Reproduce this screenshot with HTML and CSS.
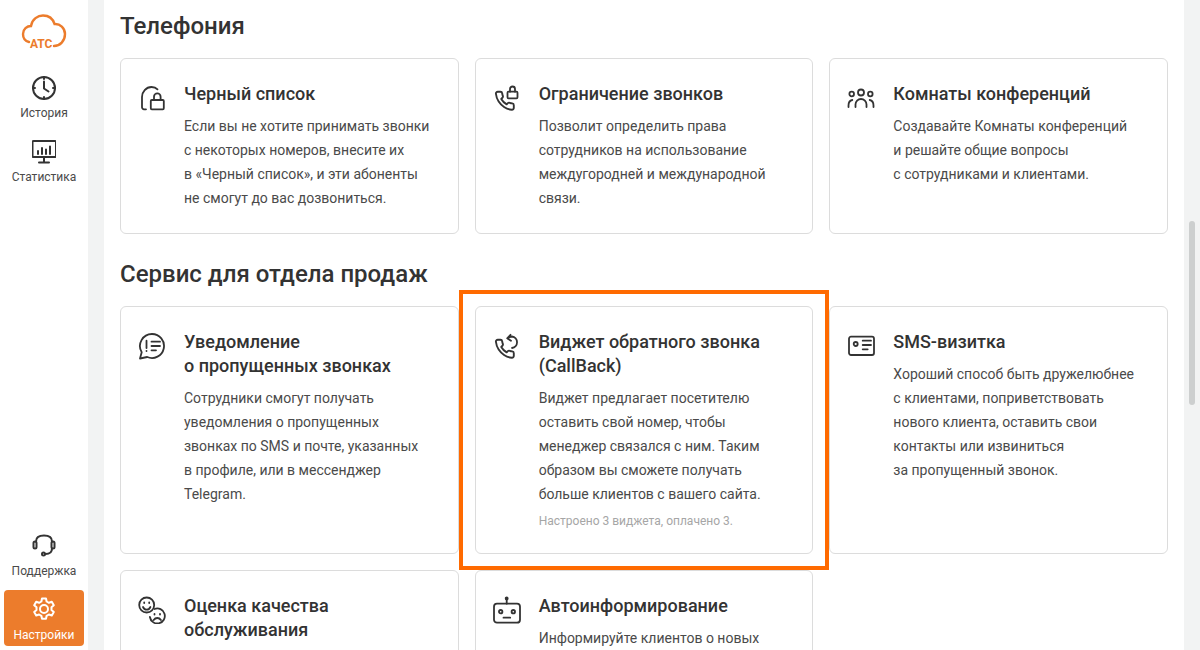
FILE: index.html
```html
<!DOCTYPE html>
<html lang="ru">
<head>
  <meta charset="UTF-8" />
  <meta name="viewport" content="width=device-width, initial-scale=1" />
  <title>Настройки АТС</title>
  <link rel="stylesheet" href="styles.css">
</head>
<body>
  <nav class="sidebar">
    <div class="logo">
      <svg width="44" height="36" viewBox="0 0 44 36" fill="none" stroke="#ec7c2c" stroke-width="2.400" stroke-linecap="round">
        <path d="M7 28C3 27 1 23.500 1 20C1 15 5 12 9 12C10 5 16 1.500 21 1.500C27 1.500 31 5 32.500 10C38 9.500 43 14 43 20C43 27 38 32 32 32"/>
        <text class="logo-text" x="8" y="33.500">АТС</text>
      </svg>
    </div>
    <a class="nav-item">
      <svg class="nav-icon" viewBox="0 0 24 24" fill="none" stroke="#333" stroke-width="2" stroke-linecap="round" stroke-linejoin="round">
        <circle cx="12" cy="12" r="11"/>
        <path d="M12 5.500V12.500L16.500 15.500M12 1v2M12 21v2M1 12h2M21 12h2"/>
      </svg>
      <span>История</span>
    </a>
    <a class="nav-item">
      <svg class="nav-icon" viewBox="0 0 24 24" fill="none" stroke="#333" stroke-width="2" stroke-linecap="round" stroke-linejoin="round">
        <rect x="0.500" y="1" width="23.500" height="16" rx="1"/>
        <path d="M12 17v5M7 22.500h10M6 14v-3M10 14V8M14 14V9.500M18 14V6.500"/>
      </svg>
      <span>Статистика</span>
    </a>
    <a class="nav-item nav-item--push nav-item--low">
      <svg class="nav-icon" viewBox="0 0 24 24" fill="none" stroke="#333" stroke-width="2" stroke-linecap="round" stroke-linejoin="round">
        <path d="M4 8.500C4 4.500 7.500 2.500 12 2.500S20 4.500 20 8.500"/>
        <rect x="1.500" y="8.500" width="3" height="7" rx="1.500"/>
        <rect x="19.500" y="8.500" width="3" height="7" rx="1.500"/>
        <path d="M20 15.500C20 19 17.500 21 13.500 21"/>
        <circle cx="11.500" cy="21" r="1.500"/>
      </svg>
      <span>Поддержка</span>
    </a>
    <a class="nav-item nav-item--active nav-item--low">
      <svg class="nav-icon" viewBox="0 0 24 24" fill="none" stroke="#fff" stroke-width="2" stroke-linecap="round" stroke-linejoin="round">
        <circle cx="12" cy="12" r="4"/>
        <path d="M10 1.500h4l.6 3 2.300 1.300 2.900-1 2 3.500-2.300 2v2.700l2.300 2-2 3.500-2.900-1-2.300 1.300-.6 3h-4l-.6-3-2.300-1.300-2.900 1-2-3.500 2.300-2v-2.700l-2.300-2 2-3.500 2.900 1 2.300-1.300z"/>
      </svg>
      <span>Настройки</span>
    </a>
  </nav>

  <main class="content">
    <h2 class="section-title">Телефония</h2>
    <div class="cards">
      <div class="card">
        <svg class="card-icon" viewBox="0 0 28 28">
          <path d="M8 25.300H6a2 2 0 0 1-2-2V13C4 8 8 3 13.500 3c2.500 0 4.500.7 6 2.300"/>
          <rect x="12.800" y="16" width="13" height="9.300" rx="1"/>
          <path d="M16 16v-3.300a3.300 3.300 0 0 1 6.600 0V16"/>
        </svg>
        <div>
          <h3 class="card-title">Черный список</h3>
          <p class="card-text">Если вы не хотите принимать звонки<br>с некоторых номеров, внесите их<br>в «Черный список», и эти абоненты<br>не смогут до вас дозвониться.</p>
        </div>
      </div>
      <div class="card">
        <svg class="card-icon" viewBox="0 0 28 28">
          <path class="phone" transform="translate(1 6) scale(.9)" d="M22 16.920v3a2 2 0 0 1-2.180 2 19.790 19.790 0 0 1-8.630-3.070 19.500 19.500 0 0 1-6-6 19.790 19.790 0 0 1-3.070-8.670A2 2 0 0 1 4.110 2h3a2 2 0 0 1 2 1.720 12.840 12.840 0 0 0 .7 2.810 2 2 0 0 1-.45 2.110L8.090 9.910a16 16 0 0 0 6 6l1.270-1.270a2 2 0 0 1 2.110-.45 12.840 12.840 0 0 0 2.810.7A2 2 0 0 1 22 16.920z"/>
          <rect x="14.500" y="7.700" width="10" height="6.600" rx="1"/>
          <path d="M17 7.700V5a2.500 2.500 0 0 1 5 0v2.700"/>
        </svg>
        <div>
          <h3 class="card-title">Ограничение звонков</h3>
          <p class="card-text">Позволит определить права<br>сотрудников на использование<br>междугородней и международной<br>связи.</p>
        </div>
      </div>
      <div class="card">
        <svg class="card-icon" viewBox="0 0 28 28">
          <circle cx="14" cy="8.500" r="3"/>
          <circle cx="4.700" cy="10" r="2.300"/>
          <circle cx="23.300" cy="10" r="2.300"/>
          <path d="M8.500 23v-2.500a5.500 5.500 0 0 1 11 0V23M1.500 23v-1.500c0-3 1.500-5 3.800-5.500M26.500 23v-1.500c0-3-1.500-5-3.800-5.500"/>
        </svg>
        <div>
          <h3 class="card-title">Комнаты конференций</h3>
          <p class="card-text">Создавайте Комнаты конференций<br>и решайте общие вопросы<br>с сотрудниками и клиентами.</p>
        </div>
      </div>
    </div>

    <h2 class="section-title section-title--next">Сервис для отдела продаж</h2>
    <div class="cards">
      <div class="card">
        <svg class="card-icon" viewBox="0 0 28 28">
          <path d="M14 2a12 12 0 1 1-4.800 23L2 26.500l1.700-6.300A12 12 0 0 1 14 2z"/>
          <path d="M8.500 8.700v7.300M8.500 18.800v.2M13.500 9.700h8.500M13.500 14h8.500M13.500 18.300h4.500"/>
        </svg>
        <div>
          <h3 class="card-title">Уведомление<br>о пропущенных звонках</h3>
          <p class="card-text">Сотрудники смогут получать<br>уведомления о пропущенных<br>звонках по SMS и почте, указанных<br>в профиле, или в мессенджер<br>Telegram.</p>
        </div>
      </div>
      <div class="card card--marked">
        <svg class="card-icon" viewBox="0 0 28 28">
          <path class="phone" transform="translate(1 6) scale(.9)" d="M22 16.920v3a2 2 0 0 1-2.180 2 19.790 19.790 0 0 1-8.630-3.070 19.500 19.500 0 0 1-6-6 19.790 19.790 0 0 1-3.070-8.670A2 2 0 0 1 4.110 2h3a2 2 0 0 1 2 1.720 12.840 12.840 0 0 0 .7 2.810 2 2 0 0 1-.45 2.110L8.090 9.910a16 16 0 0 0 6 6l1.270-1.270a2 2 0 0 1 2.110-.45 12.840 12.840 0 0 0 2.810.7A2 2 0 0 1 22 16.920z"/>
          <path d="M14.500 6.500C16 5 17.500 4.500 19 4.500a5.800 5.800 0 0 1 0 11.500M17.500 2.800L14.200 6.300 18 8.800"/>
        </svg>
        <div>
          <h3 class="card-title">Виджет обратного звонка<br>(CallBack)</h3>
          <p class="card-text">Виджет предлагает посетителю<br>оставить свой номер, чтобы<br>менеджер связался с ним. Таким<br>образом вы сможете получать<br>больше клиентов с вашего сайта.</p>
          <p class="card-note">Настроено 3 виджета, оплачено 3.</p>
        </div>
      </div>
      <div class="card">
        <svg class="card-icon" viewBox="0 0 28 28">
          <rect x="2" y="4.700" width="25" height="18.300" rx="2"/>
          <circle cx="8.700" cy="12" r="2"/>
          <path d="M15.700 8.700H24M15.700 13H24M15.700 17.300h5"/>
        </svg>
        <div>
          <h3 class="card-title">SMS-визитка</h3>
          <p class="card-text">Хороший способ быть дружелюбнее<br>с клиентами, поприветствовать<br>нового клиента, оставить свои<br>контакты или извиниться<br>за пропущенный звонок.</p>
        </div>
      </div>
      <div class="card">
        <svg class="card-icon" viewBox="0 0 28 28">
          <circle cx="8.700" cy="9" r="7.500"/>
          <path d="M5 11c1 2 2.500 2.700 3.700 2.700s2.700-.7 3.700-2.700"/>
          <path d="M6.200 6.500v.5M11.200 6.500v.5M16.500 18v.5M22 18v.5"/>
          <path d="M16.500 13A7.500 7.500 0 1 1 11.900 21M15.700 24c1-1.500 2.300-2 3.600-2s2.600.5 3.600 2"/>
        </svg>
        <div>
          <h3 class="card-title">Оценка качества<br>обслуживания</h3>
        </div>
      </div>
      <div class="card">
        <svg class="card-icon" viewBox="0 0 28 28">
          <rect x="1" y="7.700" width="26" height="19" rx="3"/>
          <path d="M13.700 3.500v4.200M10.500 21.700h6.700"/>
          <circle cx="13.700" cy="2.400" r="1" class="icon-dot"/>
          <circle cx="7.700" cy="15.700" r="1.700"/>
          <circle cx="20.300" cy="15.700" r="1.700"/>
        </svg>
        <div>
          <h3 class="card-title">Автоинформирование</h3>
          <p class="card-text">Информируйте клиентов о новых</p>
        </div>
      </div>
    </div>
  </main>

  <div class="scrollbar"><div class="scrollbar-thumb"></div></div>
</body>
</html>
```

FILE: styles.css
```css
* {
  box-sizing: border-box;
}
html, body {
  height: 650px;
  overflow: hidden;
}
body {
  margin: 0;
  font-family: 'Roboto', sans-serif;
  background: #f2f3f3;
  color: #333;
  display: flex;
}
.sidebar {
  width: 88px;
  height: 650px;
  flex: none;
  background: #fff;
  padding: 0 4px 4px;
  display: flex;
  flex-direction: column;
  gap: 8px;
}
.logo {
  height: 62px;
  padding: 14px 0 0 18px;
}
.logo svg {
  display: block;
  overflow: visible;
}
.logo-text {
  font-family: 'Roboto', sans-serif;
  font-size: 12px;
  font-weight: 700;
  fill: #ec7c2c;
  stroke: none;
}
.nav-item {
  height: 56px;
  padding-top: 6px;
  border-radius: 4px;
  display: flex;
  flex-direction: column;
  align-items: center;
  gap: 6px;
  font-size: 12px;
  line-height: 14px;
  color: #4a4a4a;
  cursor: pointer;
}
.nav-item--push {
  margin-top: auto;
}
.nav-item--low {
  padding-top: 7px;
  gap: 7px;
}
.nav-item--active {
  background: #ec7c2c;
  color: #fff;
}
.nav-icon {
  width: 24px;
  height: 24px;
  flex: none;
  display: block;
}
.content {
  width: 1080px;
  height: 650px;
  flex: none;
  margin-left: 16px;
  background: #fff;
  padding: 10px 16px 0;
  overflow: hidden;
}
.section-title {
  margin: 0 0 16px;
  font-size: 24px;
  line-height: 32px;
  font-weight: 500;
  color: #333;
}
.section-title--next {
  margin-top: 24px;
}
.cards {
  display: grid;
  grid-template-columns: repeat(3, 1fr);
  gap: 16px;
}
.card {
  position: relative;
  display: flex;
  gap: 18px;
  padding: 23px 17px;
  background: #fff;
  border: 1px solid #dcdcdc;
  border-radius: 6px;
}
.card--marked::after {
  content: "";
  position: absolute;
  top: -17px;
  left: -17px;
  right: -17px;
  bottom: -17px;
  border: 4px solid #ff6a00;
  pointer-events: none;
}
.card-icon {
  width: 28px;
  height: 28px;
  flex: none;
  margin-top: 2px;
  fill: none;
  stroke: #333;
  stroke-width: 1.8;
  stroke-linecap: round;
  stroke-linejoin: round;
}
.card-icon .phone {
  stroke-width: 2.100;
}
.icon-dot {
  fill: #333;
}
.card-title {
  margin: 0 0 8px;
  font-size: 18px;
  line-height: 24px;
  font-weight: 500;
  color: #333;
}
.card-text {
  margin: 0;
  font-size: 14px;
  line-height: 24px;
  color: #4a4a4a;
}
.card-note {
  margin: 6px 0 0;
  font-size: 12px;
  line-height: 18px;
  color: #a6a6a6;
}
.scrollbar {
  width: 16px;
  height: 650px;
  flex: none;
  padding: 221px 5px 0;
}
.scrollbar-thumb {
  height: 184px;
  background: #cdcfcf;
  border-radius: 3px;
}
```
